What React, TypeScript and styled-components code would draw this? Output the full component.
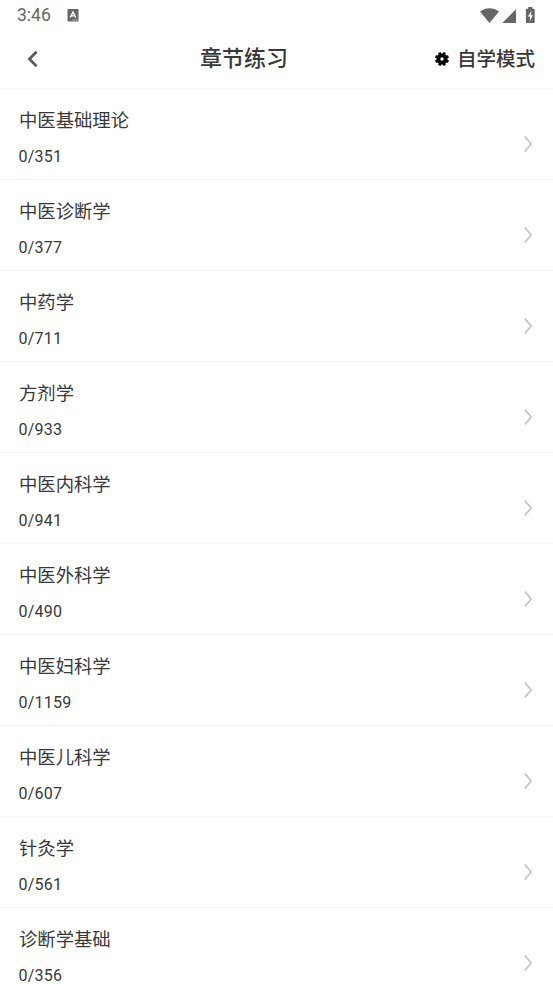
import React from 'react';
import styled, { createGlobalStyle } from 'styled-components';

const GlobalStyle = createGlobalStyle`
  * { box-sizing: border-box; }
  body { margin: 0; background: #fff; font-family: Roboto, "Noto Sans CJK SC", sans-serif; color: #383838; }
  svg { display: block; flex: none; }
`;
const Page = styled.div`height: 984px; overflow: hidden; background: #fff;`;
const StatusBar = styled.div`
  height: 30px; display: flex; align-items: center; padding: 0 18px 0 17px; color: #666;
`;
const Time = styled.span`font-size: 17.5px; line-height: 30px; width: 50px;`;
const StatusIcons = styled.div`margin-left: auto; display: flex; align-items: center; height: 28px;`;
const Header = styled.header`
  height: 59px; display: grid; grid-template-columns: 174px 88px 1fr; align-items: center;
  padding: 0 18px 0 26px; border-bottom: 1px solid #f4f4f4;
`;
const Title = styled.h1`
  margin: 0; font-size: 22px; line-height: 30px; font-weight: 500; white-space: nowrap;
`;
const Mode = styled.div`
  display: flex; align-items: center; justify-content: flex-end; gap: 8px;
  font-size: 19.5px; font-weight: 500; line-height: 30px;
`;
const ModeLabel = styled.span`padding-top: 2px;`;
const Row = styled.div`
  height: 91px; display: flex; align-items: flex-start; justify-content: space-between;
  padding: 17px 20px 0 19px; border-bottom: 1px solid #f4f4f4;
`;
const Name = styled.div`font-size: 18.35px; line-height: 30px;`;
const Count = styled.div`
  font-size: 16px; line-height: 20px; margin: 11px 0 0 -0.5px; letter-spacing: 0.25px;
`;
const Arrow = styled.svg`margin-top: 29px;`;

const chapters: [string, string][] = [
  ['中医基础理论', '0/351'], ['中医诊断学', '0/377'], ['中药学', '0/711'], ['方剂学', '0/933'],
  ['中医内科学', '0/941'], ['中医外科学', '0/490'], ['中医妇科学', '0/1159'], ['中医儿科学', '0/607'],
  ['针灸学', '0/561'], ['诊断学基础', '0/356'],
];

const KeyboardIcon = () => (
  <svg width="12" height="13" viewBox="0 0 12 13">
    <rect x="0.5" y="0" width="11" height="12.5" rx="1" fill="#666" />
    <path d="M3.200 8.500 6 3l2.800 5.500M4 6.900h4" stroke="#fff" strokeWidth="1.400" fill="none" />
    <path d="M5.500 11h1M7.400 11h1M9.300 11h1" stroke="#fff" strokeWidth="0.800" />
  </svg>
);

const SignalIcons = () => (
  <svg width="55" height="18" viewBox="480 5 55 18" fill="#666">
    <path d="M480 10.500C485.500 6 493.500 6 499 10.500L489.500 22Z" />
    <path d="M516 8.200V22H502.300Z" />
    <path d="M528.300 7.700V6h4v1.700h1.400q1 0 1 1V21q0 1-1 1h-6.800q-1 0-1-1V8.700q0-1 1-1Z" />
    <path d="M531.400 9.800 527.900 15.500h2V20l3-5.700h-1.900Z" fill="#fff" />
  </svg>
);

const BackIcon = () => (
  <svg width="14" height="18" viewBox="0 0 14 18">
    <path d="M10.600 1.800 3.400 9l7.200 7.200" fill="none" stroke="#5c5c5c" strokeWidth="2.700" />
  </svg>
);

const GearIcon = () => (
  <svg width="14" height="14" viewBox="-7 -7 14 14">
    <circle r="3.600" fill="none" stroke="#000" strokeWidth="3.800" />
    {[0, 45, 90, 135, 180, 225, 270, 315].map((angle) => (
      <path key={angle} d="M-1.600-5-1.200-7H1.200L1.600-5Z" transform={`rotate(${angle + 22.5})`} />
    ))}
  </svg>
);

export default function App() {
  return (
    <Page>
      <GlobalStyle />
      <StatusBar>
        <Time>3:46</Time>
        <KeyboardIcon />
        <StatusIcons><SignalIcons /></StatusIcons>
      </StatusBar>
      <Header>
        <BackIcon />
        <Title>章节练习</Title>
        <Mode><GearIcon /><ModeLabel>自学模式</ModeLabel></Mode>
      </Header>
      {chapters.map(([name, count]) => (
        <Row key={name}>
          <div><Name>{name}</Name><Count>{count}</Count></div>
          <Arrow width="10" height="18" viewBox="0 0 10 18">
            <path d="M1.800 1.600 8.200 9l-6.400 7.400" fill="none" stroke="#c4c4c4" strokeWidth="1.700" />
          </Arrow>
        </Row>
      ))}
    </Page>
  );
}
